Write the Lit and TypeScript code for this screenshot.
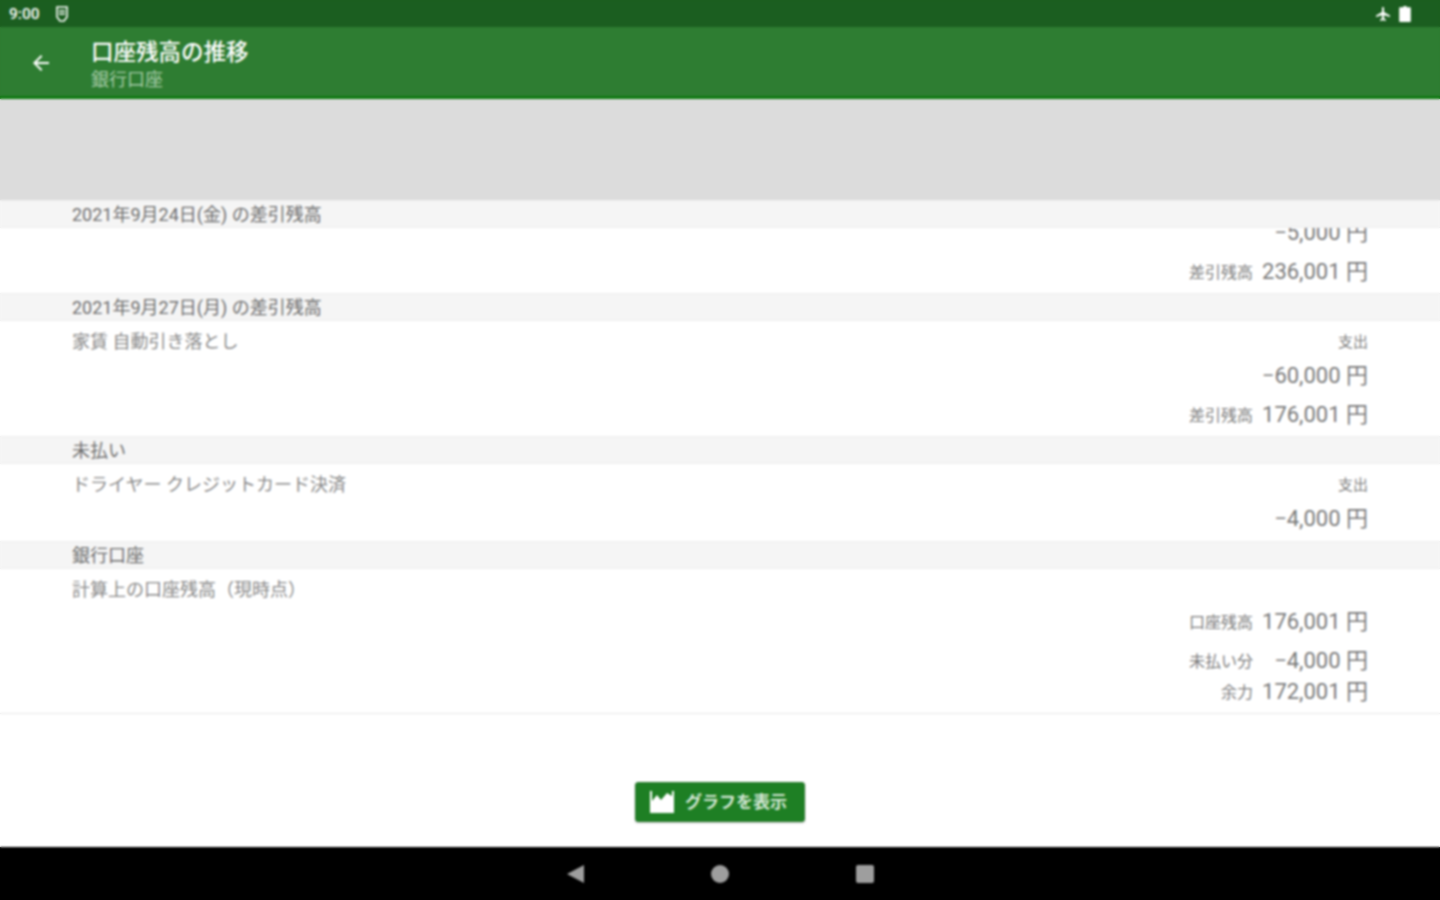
import { LitElement, html, css, svg } from "lit";
import { customElement } from "lit/decorators.js";

type Line = { label?: string; value?: string; h: number };
type Row = { title?: string; lines: Line[]; pb: number; clip?: number };
type Section = { head: string; row: Row };

const sections: Section[] = [
  {
    head: "2021年9月24日(金) の差引残高",
    row: {
      clip: 65,
      pb: 5,
      lines: [
        { value: "−5,000 円", h: 44 },
        { label: "差引残高", value: "236,001 円", h: 34 },
      ],
    },
  },
  {
    head: "2021年9月27日(月) の差引残高",
    row: {
      title: "家賃 自動引き落とし",
      pb: 5,
      lines: [
        { label: "支出", h: 24 },
        { value: "−60,000 円", h: 44 },
        { label: "差引残高", value: "176,001 円", h: 34 },
      ],
    },
  },
  {
    head: "未払い",
    row: {
      title: "ドライヤー クレジットカード決済",
      pb: 1,
      lines: [
        { label: "支出", h: 24 },
        { value: "−4,000 円", h: 44 },
      ],
    },
  },
  {
    head: "銀行口座",
    row: {
      title: "計算上の口座残高（現時点）",
      pb: 10,
      lines: [
        { h: 24 },
        { label: "口座残高", value: "176,001 円", h: 40 },
        { label: "未払い分", value: "−4,000 円", h: 38 },
        { label: "余力", value: "172,001 円", h: 24 },
      ],
    },
  },
];

@customElement("app-root")
export class AppRoot extends LitElement {
  static styles = css`
    :host {
      display: block;
      position: relative;
      height: 900px;
      font-family: "Roboto", "Noto Sans CJK JP", sans-serif;
      color: #757575;
      background: #fff;
      overflow: hidden;
    }
    .screen {
      height: 900px;
      display: flex;
      flex-direction: column;
    }
    .soften {
      position: absolute;
      inset: 0;
      z-index: 5;
      pointer-events: none;
      backdrop-filter: blur(0.8px);
    }
    .status {
      height: 27px;
      flex: none;
      box-sizing: border-box;
      background: #1b5e20;
      color: #fff;
      display: flex;
      align-items: center;
      padding: 0 29px 0 9px;
      font-size: 15.5px;
      font-weight: 500;
    }
    .status .time { width: 46px; }
    .status .spacer { flex: 1; }
    .status svg { display: block; }
    .status .plane { margin-right: 8px; }
    .toolbar {
      height: 72px;
      flex: none;
      box-sizing: border-box;
      background: #2e7d32;
      border-bottom: 3px solid #0f7a12;
      display: flex;
      align-items: center;
      padding: 2px 0 0 29px;
      color: #fff;
    }
    .toolbar svg { display: block; margin-right: 38px; }
    .titles { display: flex; flex-direction: column; gap: 1px; padding-top: 3px; }
    .title { font-size: 22.5px; line-height: 30px; font-weight: 500; }
    .sub { font-size: 18px; line-height: 24px; color: #a5cba8; }
    .banner { height: 101px; flex: none; background: #dcdcdc; }
    .list {
      flex: 1;
      min-height: 0;
      display: flex;
      flex-direction: column;
    }
    .head {
      height: 28px;
      flex: none;
      box-sizing: border-box;
      background: #f5f5f5;
      border-top: 1px solid #eeeeee;
      border-bottom: 1px solid #eeeeee;
      padding-left: 72px;
      font-size: 18px;
      line-height: 27px;
      color: #6f6f6f;
      white-space: nowrap;
      position: relative;
      z-index: 1;
    }
    .row {
      flex: none;
      box-sizing: border-box;
      display: flex;
      justify-content: space-between;
      padding: 8px 72px 0;
      overflow: hidden;
      background: #fff;
    }
    .row.clip { align-items: flex-end; }
    .row-title {
      font-size: 18px;
      line-height: 24px;
      padding-top: 1px;
      color: #8a8a8a;
      white-space: nowrap;
    }
    .amounts { display: flex; flex-direction: column; align-items: flex-end; }
    .line {
      box-sizing: border-box;
      display: flex;
      align-items: center;
      justify-content: flex-end;
      gap: 9px;
      padding-bottom: 4px;
      white-space: nowrap;
    }
    .label { font-size: 16px; color: #7d7d7d; position: relative; top: 2px; }
    .line.solo { padding-bottom: 2px; }
    .line.solo .label { font-size: 15px; top: 0; }
    .value { font-size: 22px; color: #7a7a7a; min-width: 106px; text-align: right; }
    .last { border-bottom: 1px solid #e8e8e8; }
    .footer {
      flex: none;
      display: flex;
      justify-content: center;
      padding-bottom: 25px;
    }
    .graph {
      width: 170px;
      height: 40px;
      box-sizing: border-box;
      background: #1e7f24;
      border: 1px solid #2e7d32;
      border-radius: 3px;
      display: flex;
      align-items: center;
      justify-content: center;
      gap: 11px;
      color: #d5e8d6;
      font-size: 17px;
      font-weight: 700;
      box-shadow: 0 1px 2px rgba(0, 0, 0, 0.25);
      padding: 0 3px 0 0;
      font-family: inherit;
    }
    .graph span { padding-bottom: 4px; }
    .graph svg { display: block; }
    .nav {
      height: 53px;
      flex: none;
      background: #000;
      display: flex;
      align-items: center;
      justify-content: center;
      gap: 127px;
      padding-right: 1px;
    }
    .nav svg { display: block; }
  `;

  private icon(w: number, h: number, body: unknown, cls = "") {
    return html`<svg class=${cls} width=${w} height=${h} viewBox="0 0 ${w} ${h}">${body}</svg>`;
  }

  private renderRow(r: Row, last: boolean) {
    return html`<div
      class="row ${r.clip ? "clip" : ""} ${last ? "last" : ""}"
      style="padding-bottom:${r.pb}px;${r.clip ? `height:${r.clip}px` : ""}"
    >
      <div class="row-title">${r.title ?? ""}</div>
      <div class="amounts">
        ${r.lines.map(
          (l) => html`<div class="line ${l.value ? "" : "solo"}" style="height:${l.h}px">
            ${l.label ? html`<span class="label">${l.label}</span>` : ""}
            ${l.value ? html`<span class="value">${l.value}</span>` : ""}
          </div>`
        )}
      </div>
    </div>`;
  }

  render() {
    return html`<div class="screen">
        <div class="status">
          <span class="time">9:00</span>
          ${this.icon(
            14,
            16,
            svg`<path d="M2 1h10v10l-3 4H5l-3-4z" fill="none" stroke="#fff" stroke-width="1.6"/><path d="M4 5h6M4 8h6" stroke="#fff" stroke-width="1.4"/>`
          )}
          <span class="spacer"></span>
          ${this.icon(
            16,
            16,
            svg`<path d="M7 1.500c0-.8 2-.8 2 0V6l6 3.400v1.600L9 9.300v3l1.800 1.300V15L8 14.200 5.200 15v-1.400L7 12.300v-3L1 11V9.400L7 6z" fill="#fff"/>`,
            "plane"
          )}
          ${this.icon(
            12,
            16,
            svg`<path d="M4.500 0h3v1.200H11a.8.8 0 0 1 .8.8V15.200a.8.8 0 0 1-.8.8H1a.8.8 0 0 1-.8-.8V2a.8.8 0 0 1 .8-.8h3.500z" fill="#fff"/>`
          )}
        </div>
        <div class="toolbar">
          ${this.icon(
            24,
            24,
            svg`<path d="M20 11H7.800l5.600-5.600L12 4l-8 8 8 8 1.400-1.400L7.800 13H20z" fill="#fff"/>`
          )}
          <div class="titles">
            <div class="title">口座残高の推移</div>
            <div class="sub">銀行口座</div>
          </div>
        </div>
        <div class="banner"></div>
        <div class="list">
          ${sections.map(
            (s, i) => html`<div class="head">${s.head}</div>
              ${this.renderRow(s.row, i === sections.length - 1)}`
          )}
        </div>
        <div class="footer">
          <button class="graph">
            ${this.icon(
              24,
              22,
              svg`<path d="M0 0h2v10l5-6 4 5 6-7 5 3V0h2v22H0z" fill="#fff"/>`
            )}
            <span>グラフを表示</span>
          </button>
        </div>
        <div class="nav">
          ${this.icon(18, 20, svg`<path d="M18 1v18L1 10z" fill="#9e9e9e"/>`)}
          ${this.icon(18, 18, svg`<circle cx="9" cy="9" r="9" fill="#9e9e9e"/>`)}
          ${this.icon(18, 18, svg`<rect width="18" height="18" rx="2" fill="#9e9e9e"/>`)}
        </div>
      </div>
      <div class="soften"></div>`;
  }
}
